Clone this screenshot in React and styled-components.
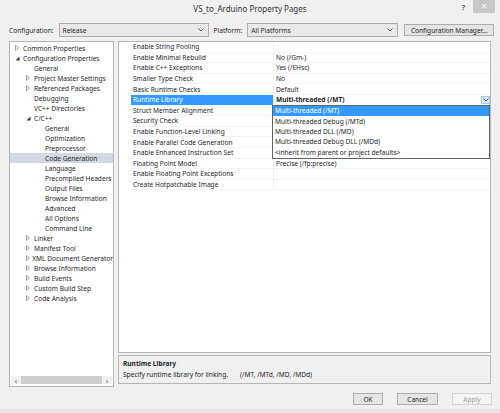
import React from "react";
import styled, { createGlobalStyle } from "styled-components";

const GlobalStyle = createGlobalStyle`
  body {
    margin: 0;
    background: #f0f0f0;
    font-family: "Noto Sans", "Liberation Sans", sans-serif;
  }
`;

const treeItems = [
  { label: "Common Properties", level: 0, arrow: "closed" },
  { label: "Configuration Properties", level: 0, arrow: "open" },
  { label: "General", level: 1 },
  { label: "Project Master Settings", level: 1, arrow: "closed" },
  { label: "Referenced Packages", level: 1, arrow: "closed" },
  { label: "Debugging", level: 1 },
  { label: "VC++ Directories", level: 1 },
  { label: "C/C++", level: 1, arrow: "open" },
  { label: "General", level: 2 },
  { label: "Optimization", level: 2 },
  { label: "Preprocessor", level: 2 },
  { label: "Code Generation", level: 2, selected: true },
  { label: "Language", level: 2 },
  { label: "Precompiled Headers", level: 2 },
  { label: "Output Files", level: 2 },
  { label: "Browse Information", level: 2 },
  { label: "Advanced", level: 2 },
  { label: "All Options", level: 2 },
  { label: "Command Line", level: 2 },
  { label: "Linker", level: 1, arrow: "closed" },
  { label: "Manifest Tool", level: 1, arrow: "closed" },
  { label: "XML Document Generator", level: 1, arrow: "closed" },
  { label: "Browse Information", level: 1, arrow: "closed" },
  { label: "Build Events", level: 1, arrow: "closed" },
  { label: "Custom Build Step", level: 1, arrow: "closed" },
  { label: "Code Analysis", level: 1, arrow: "closed" },
];

const properties = [
  { name: "Enable String Pooling", value: "" },
  { name: "Enable Minimal Rebuild", value: "No (/Gm-)" },
  { name: "Enable C++ Exceptions", value: "Yes (/EHsc)" },
  { name: "Smaller Type Check", value: "No" },
  { name: "Basic Runtime Checks", value: "Default" },
  { name: "Runtime Library", value: "Multi-threaded (/MT)", selected: true },
  { name: "Struct Member Alignment", value: "" },
  { name: "Security Check", value: "" },
  { name: "Enable Function-Level Linking", value: "" },
  { name: "Enable Parallel Code Generation", value: "" },
  { name: "Enable Enhanced Instruction Set", value: "" },
  { name: "Floating Point Model", value: "Precise (/fp:precise)" },
  { name: "Enable Floating Point Exceptions", value: "" },
  { name: "Create Hotpatchable Image", value: "" },
];

const runtimeOptions = [
  "Multi-threaded (/MT)",
  "Multi-threaded Debug (/MTd)",
  "Multi-threaded DLL (/MD)",
  "Multi-threaded Debug DLL (/MDd)",
  "<inherit from parent or project defaults>",
];

const Chevron = () => (
  <svg width="6" height="4" viewBox="0 0 6 4">
    <path d="M0.5 0.5 L3 3 L5.5 0.5" fill="none" stroke="#555" strokeWidth="1" />
  </svg>
);

const TreeArrow = ({ type }) =>
  type === "open" ? (
    <svg width="5" height="5" viewBox="0 0 5 5">
      <path d="M4.5 0.5 L4.5 4.5 L0.5 4.5 Z" fill="#333" />
    </svg>
  ) : (
    <svg width="4" height="6" viewBox="0 0 4 6">
      <path d="M0.5 0.5 L3.5 3 L0.5 5.5 Z" fill="none" stroke="#8a8a8a" strokeWidth="0.8" />
    </svg>
  );

export default function App() {
  return (
    <>
      <GlobalStyle />
      <Window>
        <TitleBar>
          <span />
          <Title>VS_to_Arduino Property Pages</Title>
          <TitleControls>
            <HelpMark>?</HelpMark>
            <CloseButton>×</CloseButton>
          </TitleControls>
        </TitleBar>

        <ConfigRow>
          <Label>Configuration:</Label>
          <Combo width={150}>
            <span>Release</span>
            <Chevron />
          </Combo>
          <Label>Platform:</Label>
          <Combo width={151}>
            <span>All Platforms</span>
            <Chevron />
          </Combo>
          <Button width={90}>Configuration Manager...</Button>
        </ConfigRow>

        <Body>
          <TreePanel>
            <TreeList>
              {treeItems.map((item, i) => (
                <TreeRow key={i} level={item.level} selected={item.selected}>
                  <ArrowBox>{item.arrow && <TreeArrow type={item.arrow} />}</ArrowBox>
                  {item.label}
                </TreeRow>
              ))}
            </TreeList>
            <HScroll>
              <ScrollArrow>‹</ScrollArrow>
              <ScrollThumb />
              <ScrollArrow>›</ScrollArrow>
            </HScroll>
          </TreePanel>

          <RightColumn>
            <Grid>
              {properties.map((p, i) => (
                <PropRow key={i}>
                  <Gutter />
                  <NameCell selected={p.selected}>{p.name}</NameCell>
                  <ValueCell bold={p.selected}>
                    {p.value}
                    {p.selected && (
                      <>
                        <DropButton>
                          <Chevron />
                        </DropButton>
                        <DropList>
                          {runtimeOptions.map((o, j) => (
                            <DropItem key={j} active={j === 0}>
                              {o}
                            </DropItem>
                          ))}
                        </DropList>
                      </>
                    )}
                  </ValueCell>
                </PropRow>
              ))}
            </Grid>
            <Description>
              <DescTitle>Runtime Library</DescTitle>
              <DescText>
                <DescLead>Specify runtime library for linking.</DescLead>
                <span>(/MT, /MTd, /MD, /MDd)</span>
              </DescText>
            </Description>
          </RightColumn>
        </Body>

        <Footer>
          <Button width={30}>OK</Button>
          <Button width={41}>Cancel</Button>
          <Button width={40} disabled>
            Apply
          </Button>
        </Footer>
      </Window>
    </>
  );
}

const Window = styled.div`
  width: 500px;
  height: 413px;
  box-sizing: border-box;
  background: #f0f0f0;
  border-bottom: 4px solid #e6e6e6;
  display: flex;
  flex-direction: column;
  font-size: 6.6px;
  color: #1e1e1e;
  overflow: hidden;
`;

const TitleBar = styled.div`
  height: 18px;
  display: grid;
  grid-template-columns: 1fr auto 1fr;
  align-items: start;
`;

const Title = styled.div`
  font-size: 8px;
  color: #333;
  padding-top: 3px;
`;

const TitleControls = styled.div`
  display: flex;
  justify-content: flex-end;
  align-items: flex-start;
  padding-right: 5px;
`;

const HelpMark = styled.div`
  font-size: 7px;
  font-weight: bold;
  color: #555;
  margin: 3px 8px 0 0;
`;

const CloseButton = styled.div`
  width: 22px;
  height: 13px;
  background: #c7c7c7;
  color: #fff;
  font-size: 10px;
  line-height: 13px;
  text-align: center;
`;

const ConfigRow = styled.div`
  display: flex;
  align-items: center;
  height: 14px;
  margin-top: 5px;
  padding-left: 9px;
  gap: 5px;
`;

const Label = styled.div`
  white-space: nowrap;
`;

const Combo = styled.div`
  width: ${(p) => p.width}px;
  height: 14px;
  box-sizing: border-box;
  border: 1px solid #acacac;
  background: #e9e9e9;
  display: flex;
  align-items: center;
  justify-content: space-between;
  padding: 0 4px 0 3px;
`;

const Button = styled.div`
  width: ${(p) => p.width}px;
  height: 12px;
  box-sizing: border-box;
  border: 1px solid ${(p) => (p.disabled ? "#d3d3d3" : "#adadad")};
  background: ${(p) => (p.disabled ? "#f4f4f4" : "#e5e5e5")};
  color: ${(p) => (p.disabled ? "#a0a0a0" : "#1e1e1e")};
  display: flex;
  align-items: center;
  justify-content: center;
  white-space: nowrap;
  margin-left: 1px;
`;

const Body = styled.div`
  display: flex;
  margin-top: 4px;
  padding-left: 9px;
  gap: 4px;
  height: 346px;
`;

const TreePanel = styled.div`
  width: 105px;
  box-sizing: border-box;
  border: 1px solid #b5b5b5;
  background: #fff;
  display: flex;
  flex-direction: column;
  justify-content: space-between;
  padding-bottom: 2px;
`;

const TreeList = styled.div`
  padding-top: 1px;
`;

const TreeRow = styled.div`
  height: 10px;
  display: flex;
  align-items: center;
  white-space: nowrap;
  padding-left: ${(p) => 5 + p.level * 11}px;
  background: ${(p) => (p.selected ? "#d4d8e2" : "transparent")};
`;

const ArrowBox = styled.span`
  width: 8px;
  display: flex;
  align-items: center;
`;

const HScroll = styled.div`
  height: 8px;
  display: flex;
  align-items: center;
  background: #f0f0f0;
  margin: 0 1px;
`;

const ScrollArrow = styled.span`
  width: 10px;
  text-align: center;
  font-size: 8px;
  color: #666;
`;

const ScrollThumb = styled.div`
  flex: 1;
  height: 8px;
  background: #cdcdcd;
`;

const RightColumn = styled.div`
  width: 373px;
  display: flex;
  flex-direction: column;
  gap: 2px;
`;

const Grid = styled.div`
  height: 312px;
  box-sizing: border-box;
  border: 1px solid #b5b5b5;
  background: #fff;
`;

const PropRow = styled.div`
  height: 10.6px;
  display: grid;
  grid-template-columns: 12px 143px 1fr;
`;

const Gutter = styled.div``;

const NameCell = styled.div`
  padding-left: 2px;
  display: flex;
  align-items: center;
  white-space: nowrap;
  border-bottom: 1px solid #f4f4f4;
  border-right: 1px solid #f0f0f0;
  background: ${(p) => (p.selected ? "#3399ff" : "transparent")};
  color: ${(p) => (p.selected ? "#fff" : "inherit")};
`;

const ValueCell = styled.div`
  position: relative;
  padding-left: 2px;
  display: flex;
  align-items: center;
  white-space: nowrap;
  border-bottom: 1px solid #f4f4f4;
  font-weight: ${(p) => (p.bold ? "bold" : "normal")};
`;

const DropButton = styled.div`
  position: absolute;
  right: 0;
  top: 1px;
  width: 9px;
  height: 8px;
  background: #dbe9f8;
  border: 1px solid #a8c8ea;
  box-sizing: border-box;
  display: flex;
  align-items: center;
  justify-content: center;
`;

const DropList = styled.div`
  position: absolute;
  left: -2px;
  right: 0;
  top: 100%;
  z-index: 2;
  background: #fff;
  border: 1px solid #646464;
  font-weight: normal;
`;

const DropItem = styled.div`
  height: 10.4px;
  display: flex;
  align-items: center;
  padding-left: 2px;
  background: ${(p) => (p.active ? "#3399ff" : "#fff")};
  color: ${(p) => (p.active ? "#fff" : "#1e1e1e")};
`;

const Description = styled.div`
  flex: 1;
  margin-bottom: 3px;
  box-sizing: border-box;
  border: 1px solid #b5b5b5;
  padding: 3px 4px;
`;

const DescTitle = styled.div`
  font-weight: bold;
`;

const DescText = styled.div`
  display: flex;
  margin-top: 2px;
  white-space: nowrap;
`;

const DescLead = styled.span`
  margin-right: 12px;
`;

const Footer = styled.div`
  display: flex;
  justify-content: flex-end;
  gap: 13px;
  padding-right: 8px;
  margin-top: 6px;
`;
